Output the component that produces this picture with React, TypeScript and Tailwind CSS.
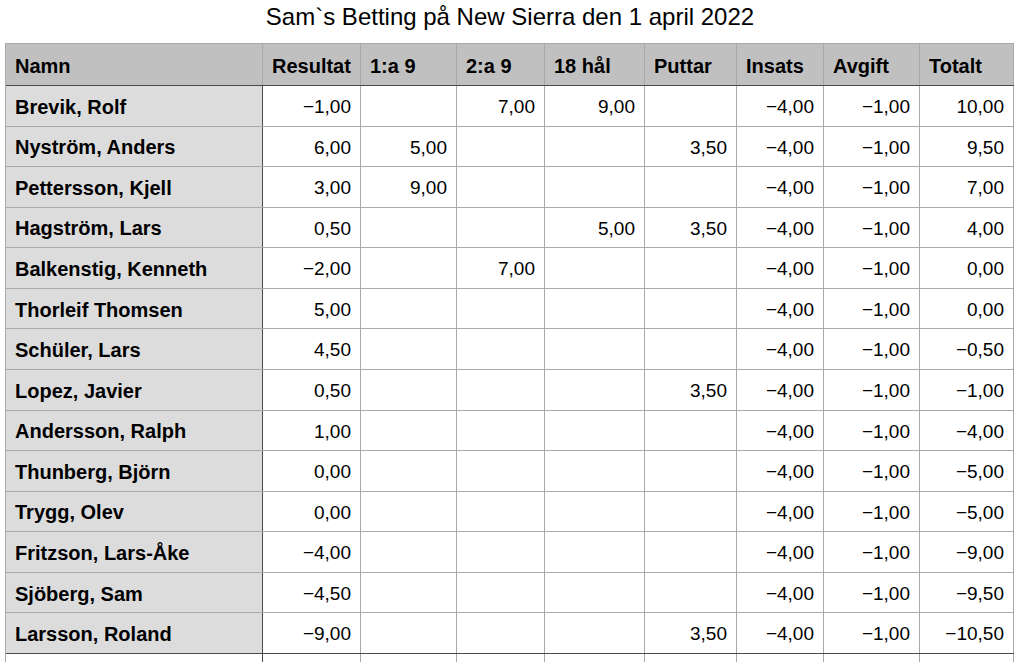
import React from "react";

const cols = [257, 98, 96, 88, 100, 92, 87, 96, 94];
const headers = ["Namn", "Resultat", "1:a 9", "2:a 9", "18 hål", "Puttar", "Insats", "Avgift", "Totalt"];

const rows: string[][] = [
  ["Brevik, Rolf", "−1,00", "", "7,00", "9,00", "", "−4,00", "−1,00", "10,00"],
  ["Nyström, Anders", "6,00", "5,00", "", "", "3,50", "−4,00", "−1,00", "9,50"],
  ["Pettersson, Kjell", "3,00", "9,00", "", "", "", "−4,00", "−1,00", "7,00"],
  ["Hagström, Lars", "0,50", "", "", "5,00", "3,50", "−4,00", "−1,00", "4,00"],
  ["Balkenstig, Kenneth", "−2,00", "", "7,00", "", "", "−4,00", "−1,00", "0,00"],
  ["Thorleif Thomsen", "5,00", "", "", "", "", "−4,00", "−1,00", "0,00"],
  ["Schüler, Lars", "4,50", "", "", "", "", "−4,00", "−1,00", "−0,50"],
  ["Lopez, Javier", "0,50", "", "", "", "3,50", "−4,00", "−1,00", "−1,00"],
  ["Andersson, Ralph", "1,00", "", "", "", "", "−4,00", "−1,00", "−4,00"],
  ["Thunberg, Björn", "0,00", "", "", "", "", "−4,00", "−1,00", "−5,00"],
  ["Trygg, Olev", "0,00", "", "", "", "", "−4,00", "−1,00", "−5,00"],
  ["Fritzson, Lars-Åke", "−4,00", "", "", "", "", "−4,00", "−1,00", "−9,00"],
  ["Sjöberg, Sam", "−4,50", "", "", "", "", "−4,00", "−1,00", "−9,50"],
  ["Larsson, Roland", "−9,00", "", "", "", "3,50", "−4,00", "−1,00", "−10,50"],
];

export default function App() {
  return (
    <div
      className="w-[1020px] h-[662px] overflow-hidden bg-white text-black"
      style={{ fontFamily: '"Liberation Sans", Arial, sans-serif' }}
    >
      <div className="h-[43px] flex items-center justify-center text-[24px] pb-[10px] pt-[0px]">
        Sam`s Betting på New Sierra den 1 april 2022
      </div>
      <div className="ml-[5px] w-[1009px] border-l border-t border-[#a9a9a9]">
        <div className="flex h-[42px] bg-[#c0c0c0] border-b border-[#4a4a4a]">
          {headers.map((h, i) => (
            <div
              key={h}
              style={{ width: cols[i] }}
              className="border-r border-[#a9a9a9] flex items-center pl-[9px] pt-[3px] text-[20px] font-bold"
            >
              {h}
            </div>
          ))}
        </div>
        {rows.map((r, ri) => (
          <div
            key={ri}
            className={`flex h-[40.57px] border-b ${ri === rows.length - 1 ? "border-[#4a4a4a]" : "border-[#a9a9a9]"}`}
          >
            {r.map((c, i) => (
              <div
                key={i}
                style={{ width: cols[i] }}
                className={
                  i === 0
                    ? "bg-[#dcdcdc] border-r border-[#4a4a4a] flex items-center pl-[9px] pt-[2px] text-[20px] font-bold"
                    : "border-r border-[#a9a9a9] flex items-center justify-end pr-[9px] pt-[3px] text-[19px]"
                }
              >
                {c}
              </div>
            ))}
          </div>
        ))}
        <div className="flex h-[40px]">
          {cols.map((w, i) => (
            <div
              key={i}
              style={{ width: w }}
              className={i === 0 ? "border-r border-[#4a4a4a]" : "border-r border-[#a9a9a9]"}
            />
          ))}
        </div>
      </div>
    </div>
  );
}
